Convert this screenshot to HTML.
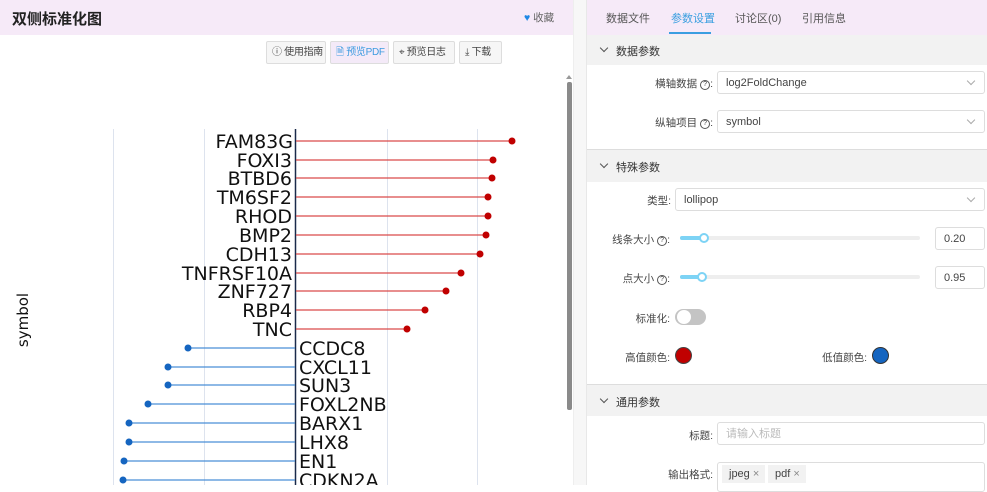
<!DOCTYPE html>
<html><head><meta charset="utf-8"><style>
*{margin:0;padding:0;box-sizing:border-box}
body{width:987px;height:485px;overflow:hidden;background:#fff;font-family:"Liberation Sans","Noto Sans CJK SC",sans-serif;font-size:11px;color:#333;position:relative}
.a{position:absolute}
.btn{position:absolute;top:41px;height:23px;border:1px solid #ddd;background:#f6f6f6;border-radius:2px;font-size:10px;letter-spacing:-0.3px;color:#444;line-height:21px;padding-left:5px;white-space:nowrap;overflow:hidden}
.hdr{position:absolute;left:587px;width:400px;background:#f2f2f2;font-size:11px;color:#333}
.box{position:absolute;border:1px solid #ddd;border-radius:3px;background:#fff;font-size:11px;color:#444;line-height:22px;padding-left:8px}
.lbl{position:absolute;font-size:10.5px;color:#444;text-align:right;white-space:nowrap}
.chev{position:absolute;right:10px;top:6px;width:6px;height:6px;border-right:1px solid #aaa;border-bottom:1px solid #aaa;transform:rotate(45deg)}
.hc{position:absolute;left:14px;width:6px;height:6px;border-right:1px solid #555;border-bottom:1px solid #555;transform:rotate(45deg)}
.q{display:inline-block;width:10px;height:10px;border:1px solid #555;border-radius:50%;font-size:7px;line-height:8px;text-align:center;vertical-align:1px}
</style></head><body>
<div class="a" style="left:0;top:0;width:573px;height:35px;background:#f6eaf8"></div>
<div class="a" style="left:12px;top:8px;font-size:15px;font-weight:bold;color:#222">双侧标准化图</div>
<div class="a" style="left:524px;top:10px;font-size:10.5px;color:#666"><span style="color:#1e88e5">&#9829;</span> 收藏</div>
<div class="btn" style="left:266px;width:60px">&#9432; 使用指南</div>
<div class="btn" style="left:330px;width:59px;background:#f4eaf8;color:#3b9be0">&#128462; 预览PDF</div>
<div class="btn" style="left:393px;width:62px">&#8982; 预览日志</div>
<div class="btn" style="left:459px;width:43px">&#10515; 下载</div>
<div class="a" style="left:573px;top:0;width:14px;height:485px;background:#f7f7f7;border-left:1px solid #eee;border-right:1px solid #e8e8e8"></div>
<div class="a" style="left:567px;top:82px;width:5px;height:328px;background:#8a8a8a;border-radius:2px"></div>
<div class="a" style="left:566px;top:75px;width:0;height:0;border-left:3px solid transparent;border-right:3px solid transparent;border-bottom:4px solid #999"></div>
<svg class="a" style="left:0;top:0" width="566" height="485">
<g stroke="#dde3ee" stroke-width="1">
<line x1="113.5" y1="129" x2="113.5" y2="485"/><line x1="204.5" y1="129" x2="204.5" y2="485"/><line x1="387.5" y1="129" x2="387.5" y2="485"/><line x1="477.5" y1="129" x2="477.5" y2="485"/>
</g>
<line x1="295.5" y1="129" x2="295.5" y2="485" stroke="#1a2a4a" stroke-width="1.5"/>
<g stroke="#d94a4a" stroke-width="1.2">
<line x1="296" y1="141" x2="512" y2="141"/><line x1="296" y1="160" x2="493" y2="160"/><line x1="296" y1="178" x2="492" y2="178"/><line x1="296" y1="197" x2="488" y2="197"/><line x1="296" y1="216" x2="488" y2="216"/><line x1="296" y1="235" x2="486" y2="235"/><line x1="296" y1="254" x2="480" y2="254"/><line x1="296" y1="273" x2="461" y2="273"/><line x1="296" y1="291" x2="446" y2="291"/><line x1="296" y1="310" x2="425" y2="310"/><line x1="296" y1="329" x2="407" y2="329"/>
</g>
<g fill="#c00000">
<circle cx="512" cy="141" r="3.5"/><circle cx="493" cy="160" r="3.5"/><circle cx="492" cy="178" r="3.5"/><circle cx="488" cy="197" r="3.5"/><circle cx="488" cy="216" r="3.5"/><circle cx="486" cy="235" r="3.5"/><circle cx="480" cy="254" r="3.5"/><circle cx="461" cy="273" r="3.5"/><circle cx="446" cy="291" r="3.5"/><circle cx="425" cy="310" r="3.5"/><circle cx="407" cy="329" r="3.5"/>
</g>
<g stroke="#4a8fd6" stroke-width="1.2">
<line x1="188" y1="348" x2="295" y2="348"/><line x1="168" y1="367" x2="295" y2="367"/><line x1="168" y1="385" x2="295" y2="385"/><line x1="148" y1="404" x2="295" y2="404"/><line x1="129" y1="423" x2="295" y2="423"/><line x1="129" y1="442" x2="295" y2="442"/><line x1="124" y1="461" x2="295" y2="461"/><line x1="123" y1="480" x2="295" y2="480"/>
</g>
<g fill="#1565c0">
<circle cx="188" cy="348" r="3.5"/><circle cx="168" cy="367" r="3.5"/><circle cx="168" cy="385" r="3.5"/><circle cx="148" cy="404" r="3.5"/><circle cx="129" cy="423" r="3.5"/><circle cx="129" cy="442" r="3.5"/><circle cx="124" cy="461" r="3.5"/><circle cx="123" cy="480" r="3.5"/>
</g>
<g font-family="DejaVu Sans, sans-serif" font-size="19" fill="#111" text-anchor="end">
<text x="293" y="148">FAM83G</text><text x="292" y="167">FOXI3</text><text x="292" y="185">BTBD6</text><text x="292" y="204">TM6SF2</text><text x="292" y="223">RHOD</text><text x="292" y="242">BMP2</text><text x="292" y="261">CDH13</text><text x="292" y="280">TNFRSF10A</text><text x="292" y="298">ZNF727</text><text x="292" y="317">RBP4</text><text x="292" y="336">TNC</text>
</g>
<g font-family="DejaVu Sans, sans-serif" font-size="19" fill="#111">
<text x="299" y="355">CCDC8</text><text x="299" y="374">CXCL11</text><text x="299" y="392">SUN3</text><text x="299" y="411">FOXL2NB</text><text x="299" y="430">BARX1</text><text x="299" y="449">LHX8</text><text x="299" y="468">EN1</text><text x="299" y="487">CDKN2A</text>
</g>
<text x="28" y="320" transform="rotate(-90 28 320)" font-family="DejaVu Sans, sans-serif" font-size="15" fill="#111" text-anchor="middle">symbol</text>
</svg>
<div class="a" style="left:587px;top:0;width:400px;height:35px;background:#f6eaf8"></div>
<div class="a" style="left:606px;top:10px;font-size:11px;color:#555">数据文件</div>
<div class="a" style="left:671px;top:10px;font-size:11px;color:#3a9fe0">参数设置</div>
<div class="a" style="left:669px;top:32px;width:42px;height:2px;background:#3a9fe0"></div>
<div class="a" style="left:735px;top:10px;font-size:11px;color:#555">讨论区(0)</div>
<div class="a" style="left:802px;top:10px;font-size:11px;color:#555">引用信息</div>

<div class="hdr" style="top:35px;height:30px"><span class="hc" style="top:10px"></span><span class="a" style="left:29px;top:8px">数据参数</span></div>
<div class="lbl" style="left:600px;width:113px;top:76px">横轴数据 <span class="q">?</span>:</div>
<div class="box" style="left:717px;top:71px;width:268px;height:23px">log2FoldChange<span class="chev"></span></div>
<div class="lbl" style="left:600px;width:113px;top:115px">纵轴项目 <span class="q">?</span>:</div>
<div class="box" style="left:717px;top:110px;width:268px;height:23px">symbol<span class="chev"></span></div>
<div class="a" style="left:587px;top:149px;width:400px;height:1px;background:#ddd"></div>
<div class="hdr" style="top:150px;height:32px"><span class="hc" style="top:11px"></span><span class="a" style="left:29px;top:9px">特殊参数</span></div>
<div class="lbl" style="left:600px;width:71px;top:193px">类型:</div>
<div class="box" style="left:675px;top:188px;width:310px;height:23px">lollipop<span class="chev"></span></div>
<div class="lbl" style="left:600px;width:70px;top:232px">线条大小 <span class="q">?</span>:</div>
<div class="a" style="left:680px;top:236px;width:240px;height:4px;background:#eee;border-radius:2px"></div>
<div class="a" style="left:680px;top:236px;width:24px;height:4px;background:#7dd3f5;border-radius:2px"></div>
<div class="a" style="left:699px;top:233px;width:10px;height:10px;border:2px solid #7dd3f5;border-radius:50%;background:#fff"></div>
<div class="box" style="left:935px;top:227px;width:50px;height:23px">0.20</div>
<div class="lbl" style="left:600px;width:70px;top:271px">点大小 <span class="q">?</span>:</div>
<div class="a" style="left:680px;top:275px;width:240px;height:4px;background:#eee;border-radius:2px"></div>
<div class="a" style="left:680px;top:275px;width:22px;height:4px;background:#7dd3f5;border-radius:2px"></div>
<div class="a" style="left:697px;top:272px;width:10px;height:10px;border:2px solid #7dd3f5;border-radius:50%;background:#fff"></div>
<div class="box" style="left:935px;top:266px;width:50px;height:23px">0.95</div>
<div class="lbl" style="left:600px;width:70px;top:311px">标准化:</div>
<div class="a" style="left:675px;top:309px;width:31px;height:16px;background:#c4c4c4;border-radius:8px"></div>
<div class="a" style="left:677px;top:310px;width:14px;height:14px;background:#fff;border-radius:50%"></div>
<div class="lbl" style="left:600px;width:70px;top:350px">高值颜色:</div>
<div class="a" style="left:675px;top:347px;width:17px;height:17px;background:#c00000;border:1px solid #444;border-radius:50%"></div>
<div class="lbl" style="left:790px;width:77px;top:350px">低值颜色:</div>
<div class="a" style="left:872px;top:347px;width:17px;height:17px;background:#1565c0;border:1px solid #333;border-radius:50%"></div>
<div class="a" style="left:587px;top:384px;width:400px;height:1px;background:#ddd"></div>
<div class="hdr" style="top:385px;height:31px"><span class="hc" style="top:11px"></span><span class="a" style="left:29px;top:9px">通用参数</span></div>
<div class="lbl" style="left:600px;width:113px;top:428px">标题:</div>
<div class="box" style="left:717px;top:422px;width:268px;height:23px;color:#bbb">请输入标题</div>
<div class="lbl" style="left:600px;width:113px;top:467px">输出格式:</div>
<div class="box" style="left:717px;top:462px;width:268px;height:30px"></div>
<div class="a" style="left:722px;top:465px;width:43px;height:18px;background:#f2f2f2;font-size:11px;color:#444;line-height:18px;padding-left:7px">jpeg <span style="color:#888">×</span></div>
<div class="a" style="left:768px;top:465px;width:38px;height:18px;background:#f2f2f2;font-size:11px;color:#444;line-height:18px;padding-left:7px">pdf <span style="color:#888">×</span></div>
</body></html>
